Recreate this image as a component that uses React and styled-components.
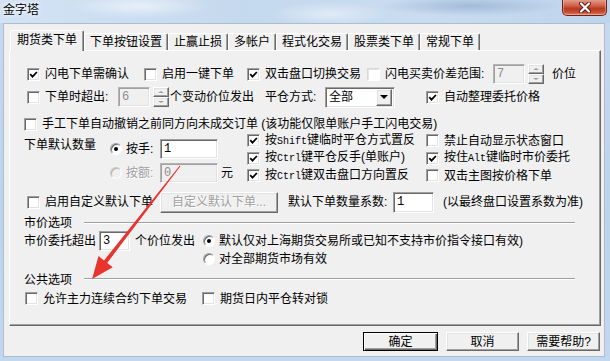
import React from 'react';
import styled, { createGlobalStyle, css } from 'styled-components';

const GlobalStyle = createGlobalStyle`
  html, body {
    margin: 0;
    padding: 0;
    overflow: hidden;
  }
  body {
    font-family: "Liberation Sans", "Noto Sans CJK SC", sans-serif;
    font-size: 12px;
    color: #000;
  }
`;

const raised = css`
  border: 1px solid;
  border-color: #fff #696969 #696969 #fff;
  box-shadow: inset -1px -1px #a0a0a0, inset 1px 1px #e3e3e3;
`;

const sunken = css`
  border: 1px solid;
  border-color: #a0a0a0 #fff #fff #a0a0a0;
  box-shadow: inset 1px 1px #696969, inset -1px -1px #e3e3e3;
`;

const Window = styled.div`
  position: relative;
  width: 610px;
  height: 361px;
  display: flex;
  flex-direction: column;
  background: linear-gradient(180deg, #c6daef 0%, #bdd3ea 60%, #c3d8ee 100%);
  overflow: hidden;
`;

const TitleBar = styled.div`
  flex: none;
  height: 23px;
  display: flex;
  align-items: flex-start;
  background:
    radial-gradient(ellipse 70px 12px at 140px 6px, rgba(255, 255, 255, 0.55), transparent),
    radial-gradient(ellipse 90px 10px at 470px 6px, rgba(120, 150, 190, 0.45), transparent),
    radial-gradient(ellipse 60px 12px at 330px 14px, rgba(255, 255, 255, 0.45), transparent),
    linear-gradient(90deg, #d3e3f4 0%, #c5d9ee 40%, #c9dcf0 70%, #bed4eb 100%);
`;

const Title = styled.span`
  margin: 3px 0 0 3px;
  font-size: 12px;
  line-height: 14px;
  color: #000;
  text-shadow: 0 0 6px #fff, 0 0 3px #fff;
`;

const CloseBtn = styled.div`
  margin-left: auto;
  margin-right: 3px;
  margin-top: -1px;
  width: 45px;
  height: 17px;
  box-sizing: border-box;
  border: 1px solid #6a2418;
  border-top: none;
  border-radius: 0 0 5px 5px;
  background: linear-gradient(180deg, #e6a595 0%, #d2654f 40%, #b8381f 60%, #c9523a 85%, #e58a6c 100%);
  box-shadow: inset 0 0 0 1px rgba(255, 200, 190, 0.45);
  display: flex;
  align-items: center;
  justify-content: center;
`;

const Client = styled.div`
  flex: 1;
  margin: 0 5px 4px 3px;
  border: 1px solid #a9bdd3;
  background: #f0f0f0;
  padding: 6px 3px 0 5px;
  display: flex;
  flex-direction: column;
`;

const TabStrip = styled.div`
  height: 20px;
  display: flex;
  align-items: flex-end;
  padding-left: 1px;
  position: relative;
  z-index: 1;
`;

const Tab = styled.div`
  box-sizing: border-box;
  height: ${p => (p.$active ? 21 : 17)}px;
  margin-bottom: ${p => (p.$active ? -1 : 0)}px;
  padding: 0 ${p => (p.$active ? 6 : 5)}px ${p => (p.$active ? 2 : 0)}px;
  display: flex;
  align-items: center;
  background: #f0f0f0;
  border-top: 1px solid #fff;
  border-left: 1px solid #fff;
  border-right: 1px solid #696969;
  border-radius: 2px 2px 0 0;
  box-shadow: inset -1px 0 #a0a0a0;
  line-height: 14px;
  white-space: nowrap;
`;

const Panel = styled.div`
  box-sizing: border-box;
  height: 276px;
  border: 1px solid;
  border-color: #fff #696969 #696969 #fff;
  box-shadow: inset -1px -1px #a0a0a0;
  padding-top: 12px;
  display: flex;
  flex-direction: column;
`;

const Row = styled.div`
  display: flex;
  align-items: center;
  height: ${p => p.$h}px;
  margin-top: ${p => p.$mt || 0}px;
  padding-left: ${p => p.$pl}px;
  white-space: nowrap;
`;

const Item = styled.div`
  flex: none;
  display: flex;
  align-items: center;
  gap: ${p => p.$gap || 5}px;
  width: ${p => (p.$w ? `${p.$w}px` : 'auto')};
  margin-left: ${p => p.$ml || 0}px;
`;

const Txt = styled.span`
  flex: none;
  line-height: 14px;
  width: ${p => (p.$w ? `${p.$w}px` : 'auto')};
  margin-left: ${p => p.$ml || 0}px;
  color: ${p => (p.$disabled ? '#a0a0a0' : '#000')};
  ${p => p.$disabled && css`text-shadow: 1px 1px #fff;`}
`;

const Mono = styled.span`
  font-family: "Liberation Mono", monospace;
  font-size: 10px;
`;

const Box = styled.span`
  flex: none;
  width: 13px;
  height: 13px;
  box-sizing: border-box;
  display: inline-flex;
  align-items: center;
  justify-content: center;
  background: #fff;
  ${sunken};
  ${p => p.$faint && css`
    border-color: #d9d9d9 #fff #fff #d9d9d9;
    box-shadow: inset 1px 1px #e4e4e4;
  `}
`;

const RadioDot = styled.span`
  flex: none;
  position: relative;
  width: 12px;
  height: 12px;
  box-sizing: border-box;
  border-radius: 50%;
  border: 1px solid;
  border-color: #a0a0a0 #fff #fff #a0a0a0;
  box-shadow: inset 1px 1px 0 #696969;
  background: ${p => (p.$disabled ? '#f0f0f0' : '#fff')};
  ${p => p.$disabled && css`
    border-color: #c8c8c8 #fff #fff #c8c8c8;
    box-shadow: inset 1px 1px 0 #b4b4b4;
  `}
  ${p => p.$on && css`
    &::after {
      content: '';
      position: absolute;
      left: 3px;
      top: 3px;
      width: 4px;
      height: 4px;
      border-radius: 50%;
      background: #000;
    }
  `}
`;

const TextBox = styled.div`
  flex: none;
  box-sizing: border-box;
  width: ${p => p.$w}px;
  height: ${p => p.$h || 20}px;
  margin-left: ${p => p.$ml || 0}px;
  ${sunken};
  ${p => p.$disabled && css`
    border-color: #b4b4b4 #fff #fff #b4b4b4;
    box-shadow: inset 1px 1px #a0a0a0, inset -1px -1px #e3e3e3;
  `}
  background: ${p => (p.$disabled ? '#f0f0f0' : '#fff')};
  color: ${p => (p.$disabled ? '#8d8d8d' : '#000')};
  font-family: "Liberation Mono", monospace;
  font-size: 12px;
  line-height: 14px;
  padding: 2px 0 0 3px;
`;

const Spin = styled.div`
  flex: none;
  width: 16px;
  height: 20px;
  margin-left: ${p => p.$ml || 0}px;
  display: flex;
  flex-direction: column;
`;

const SpinHalf = styled.div`
  flex: 1;
  box-sizing: border-box;
  ${raised};
  display: flex;
  align-items: center;
  justify-content: center;
  &::after {
    content: '';
    border-left: 3px solid transparent;
    border-right: 3px solid transparent;
    ${p => (p.$down ? 'border-top' : 'border-bottom')}: 2px solid #a0a0a0;
  }
`;

const Select = styled.div`
  flex: none;
  box-sizing: border-box;
  width: 70px;
  height: 21px;
  ${sunken};
  background: #fff;
  display: flex;
  align-items: center;
  padding: 2px;
`;

const SelectText = styled.span`
  flex: 1;
  padding-left: 1px;
  line-height: 14px;
`;

const DropBtn = styled.span`
  flex: none;
  box-sizing: border-box;
  width: 16px;
  height: 17px;
  background: #f0f0f0;
  ${raised};
  display: flex;
  align-items: center;
  justify-content: center;
  &::after {
    content: '';
    border-left: 4px solid transparent;
    border-right: 4px solid transparent;
    border-top: 4px solid #000;
  }
`;

const PushButton = styled.button`
  flex: none;
  box-sizing: border-box;
  width: ${p => p.$w}px;
  height: ${p => p.$h || 19}px;
  margin: 0 0 0 ${p => p.$ml || 0}px;
  padding: 0;
  font-family: inherit;
  font-size: 12px;
  line-height: 14px;
  background: #f0f0f0;
  color: ${p => (p.disabled ? '#a0a0a0' : '#000')};
  ${p => p.disabled && css`text-shadow: 1px 1px #fff;`}
  ${raised};
  ${p => p.$default && css`
    border: 1px solid #000;
    box-shadow: inset 1px 1px #fff, inset -1px -1px #696969, inset -2px -2px #a0a0a0;
  `}
`;

const Block = styled.div`
  display: flex;
  height: 56px;
  padding-left: 14px;
  white-space: nowrap;
`;

const RadioCol = styled.div`
  flex: none;
  width: 137px;
  padding-top: 7px;
  display: flex;
  flex-direction: column;
  gap: 4px;
`;

const OptGrid = styled.div`
  display: grid;
  grid-template-columns: 179px auto;
  grid-template-rows: 17px 18px 17px;
  align-items: center;
`;

const Heading = styled.div`
  display: flex;
  align-items: center;
  height: ${p => p.$h}px;
  margin-top: ${p => p.$mt || 0}px;
  padding-left: 14px;
`;

const Etch = styled.div`
  width: 491px;
  margin-left: 12px;
  margin-top: ${p => p.$mt || 0}px;
  border-top: 1px solid #a0a0a0;
  border-bottom: 1px solid #fff;
`;

const Footer = styled.div`
  display: flex;
  justify-content: flex-end;
  margin-top: 6px;
  padding-right: 1px;
`;

const Overlay = styled.svg`
  position: absolute;
  left: 0;
  top: 0;
  pointer-events: none;
`;

function Tick() {
  return (
    <svg width="9" height="9" viewBox="0 0 9 9">
      <path d="M1.2 4.2 L3.5 6.6 L7.9 2" fill="none" stroke="#000" strokeWidth="1.8" />
    </svg>
  );
}

function CheckItem({ checked, faint, w, ml, children }) {
  return (
    <Item $w={w} $ml={ml}>
      <Box $faint={faint}>{checked && <Tick />}</Box>
      <Txt>{children}</Txt>
    </Item>
  );
}

function RadioItem({ on, disabled, w, children }) {
  return (
    <Item $w={w} $gap={4}>
      <RadioDot $on={on} $disabled={disabled} />
      <Txt $disabled={disabled}>{children}</Txt>
    </Item>
  );
}

function SpinBox({ ml }) {
  return (
    <Spin $ml={ml}>
      <SpinHalf />
      <SpinHalf $down />
    </Spin>
  );
}

export default function App() {
  return (
    <>
      <GlobalStyle />
      <Window>
        <TitleBar>
          <Title>金字塔</Title>
          <CloseBtn>
            <svg width="14" height="11" viewBox="0 0 14 11">
              <path d="M3 1.5 L11 9.5 M11 1.5 L3 9.5" stroke="#5a1d12" strokeWidth="4" strokeLinecap="round" />
              <path d="M3 1.5 L11 9.5 M11 1.5 L3 9.5" stroke="#fff" strokeWidth="2.2" strokeLinecap="round" />
            </svg>
          </CloseBtn>
        </TitleBar>

        <Client>
          <TabStrip>
            <Tab $active>期货类下单</Tab>
            <Tab>下单按钮设置</Tab>
            <Tab>止赢止损</Tab>
            <Tab>多帐户</Tab>
            <Tab>程式化交易</Tab>
            <Tab>股票类下单</Tab>
            <Tab>常规下单</Tab>
          </TabStrip>

          <Panel>
            <Row $h={22} $pl={17}>
              <CheckItem checked w={117}>闪电下单需确认</CheckItem>
              <CheckItem w={103}>启用一键下单</CheckItem>
              <CheckItem checked w={120}>双击盘口切换交易</CheckItem>
              <CheckItem faint w={126}>闪电买卖价差范围:</CheckItem>
              <TextBox $w={32} $disabled>7</TextBox>
              <SpinBox ml={3} />
              <Txt $ml={8}>价位</Txt>
            </Row>

            <Row $h={24} $pl={17}>
              <CheckItem w={91}>下单时超出:</CheckItem>
              <TextBox $w={32} $disabled>6</TextBox>
              <SpinBox ml={3} />
              <Txt $ml={1} $w={95}>个变动价位发出</Txt>
              <Txt $w={60}>平仓方式:</Txt>
              <Select>
                <SelectText>全部</SelectText>
                <DropBtn />
              </Select>
              <CheckItem checked ml={31}>自动整理委托价格</CheckItem>
            </Row>

            <Row $h={16} $mt={7} $pl={14}>
              <CheckItem>手工下单自动撤销之前同方向未成交订单 (该功能仅限单账户手工闪电交易)</CheckItem>
            </Row>

            <Block>
              <Txt $w={86} style={{ marginTop: 6, alignSelf: 'flex-start' }}>下单默认数量</Txt>
              <RadioCol>
                <Row $h={20} $pl={0}>
                  <RadioItem on w={50}>按手:</RadioItem>
                  <TextBox $w={58}>1</TextBox>
                </Row>
                <Row $h={20} $pl={0}>
                  <RadioItem disabled w={50}>按额:</RadioItem>
                  <TextBox $w={58} $disabled>0</TextBox>
                  <Txt $ml={3}>元</Txt>
                </Row>
              </RadioCol>
              <OptGrid>
                <CheckItem checked>按<Mono>Shift</Mono>键临时平仓方式置反</CheckItem>
                <CheckItem>禁止自动显示状态窗口</CheckItem>
                <CheckItem checked>按<Mono>Ctrl</Mono>键平仓反手(单账户)</CheckItem>
                <CheckItem checked>按住<Mono>Alt</Mono>键临时市价委托</CheckItem>
                <CheckItem checked>按<Mono>Ctrl</Mono>键双击盘口方向置反</CheckItem>
                <CheckItem>双击主图按价格下单</CheckItem>
              </OptGrid>
            </Block>

            <Row $h={28} $pl={17}>
              <CheckItem w={133}>启用自定义默认下单</CheckItem>
              <PushButton disabled $w={118} $h={21}>自定义默认下单...</PushButton>
              <Txt $ml={10} $w={105}>默认下单数量系数:</Txt>
              <TextBox $w={41} $h={21}>1</TextBox>
              <Txt $ml={9}>(以最终盘口设置系数为准)</Txt>
            </Row>

            <Heading $h={14}>
              <Txt $w={48}>市价选项</Txt>
              <Etch />
            </Heading>

            <Row $h={20} $mt={1} $pl={14}>
              <Txt $w={75}>市价委托超出</Txt>
              <TextBox $w={31}>3</TextBox>
              <Txt $ml={5} $w={68}>个价位发出</Txt>
              <RadioItem on>默认仅对上海期货交易所或已知不支持市价指令接口有效)</RadioItem>
            </Row>

            <Row $h={16} $pl={193}>
              <RadioItem>对全部期货市场有效</RadioItem>
            </Row>

            <Heading $h={16} $mt={5}>
              <Txt $w={48}>公共选项</Txt>
              <Etch $mt={-3} />
            </Heading>

            <Row $h={17} $mt={2} $pl={15}>
              <CheckItem w={177}>允许主力连续合约下单交易</CheckItem>
              <CheckItem>期货日内平仓转对锁</CheckItem>
            </Row>
          </Panel>

          <Footer>
            <PushButton $default $w={75}>确定</PushButton>
            <PushButton $w={73} $ml={8}>取消</PushButton>
            <PushButton $w={73} $ml={8}>需要帮助?</PushButton>
          </Footer>
        </Client>

        <Overlay width="610" height="361" viewBox="0 0 610 361">
          <polygon
            points="180.4,166.3 179.6,165.7 104.0,260.5 98.5,256.1 92.1,279.1 112.7,267.3 107.2,262.9"
            fill="#e8332e"
          />
        </Overlay>
      </Window>
    </>
  );
}
